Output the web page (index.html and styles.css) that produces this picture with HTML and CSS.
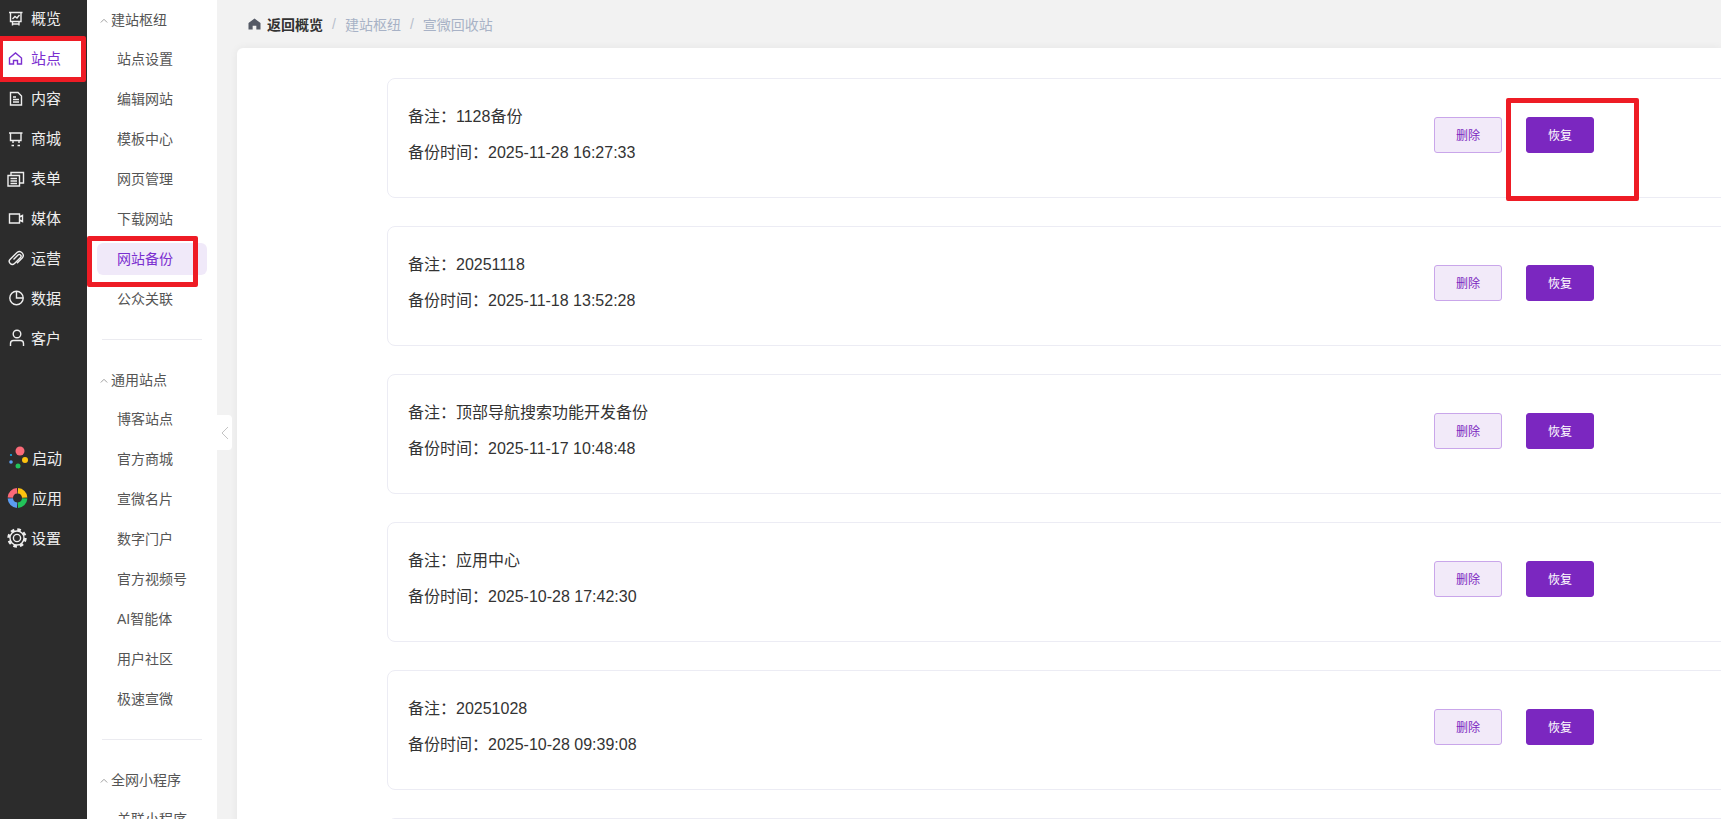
FILE: index.html
```html
<!DOCTYPE html>
<html lang="zh-CN">
<head>
    <meta charset="UTF-8">
    <title>网站备份</title>
    <link rel="stylesheet" href="styles.css">
</head>
<body>

    <!-- Icon rail -->
    <div class="rail">
        <ul class="rail-list">
            <li class="rail-item">
                <svg class="rail-icon" viewBox="0 0 20 20"><path d="M2 4.5H15.5M3.5 4.5V13.5H14V4.5M5.5 13.5V17.5M12 13.5V17.5M5.5 16H12M5.5 11L8 8.5L10 10L12.5 7"/></svg>
                <span>概览</span>
            </li>
            <li class="rail-item active">
                <svg class="rail-icon" viewBox="0 0 20 20"><path d="M2.5 10L8.5 5L14.5 10V16H10.5V12.5H6.5V16H2.5Z"/></svg>
                <span>站点</span>
            </li>
            <li class="rail-item">
                <svg class="rail-icon" viewBox="0 0 20 20"><path d="M3.5 4.5H11L14.5 8V17H3.5ZM6 9H9M6 11.5H12M6 14H12"/></svg>
                <span>内容</span>
            </li>
            <li class="rail-item">
                <svg class="rail-icon" viewBox="0 0 20 20"><path d="M2 5H15.5M3.5 5V12.5H14V5M6 12.5V15M12 12.5V15M4.5 17.5H7M10.5 17.5H13"/></svg>
                <span>商城</span>
            </li>
            <li class="rail-item">
                <svg class="rail-icon" viewBox="0 0 20 20"><path d="M1 7.5H12.5V18H1ZM3.5 10.5H10M3.5 13H10M3.5 15.5H10M4 7V4.5H16.5V15H13"/></svg>
                <span>表单</span>
            </li>
            <li class="rail-item">
                <svg class="rail-icon" viewBox="0 0 20 20"><path d="M2.5 6H12.5V15H2.5ZM12.5 9L15.5 7.5V13.5L12.5 12"/></svg>
                <span>媒体</span>
            </li>
            <li class="rail-item">
                <svg class="rail-icon" viewBox="0 0 20 20"><path d="M6.5 11.5L11 7A1.7 1.7 0 0 1 13.5 9.5L7.5 15.5A3 3 0 0 1 3.2 11.2L10 4.5A3.8 3.8 0 0 1 15.2 10L10 15.2"/></svg>
                <span>运营</span>
            </li>
            <li class="rail-item">
                <svg class="rail-icon" viewBox="0 0 20 20"><circle cx="9.5" cy="10" r="6.7"/><path d="M9.5 3.3V10H16.2"/></svg>
                <span>数据</span>
            </li>
            <li class="rail-item">
                <svg class="rail-icon" viewBox="0 0 20 20"><circle cx="10" cy="6" r="3.8"/><path d="M3.5 18V15.5A3 3 0 0 1 6.5 12.5H13.5A3 3 0 0 1 16.5 15.5V18"/></svg>
                <span>客户</span>
            </li>
        </ul>
        <ul class="rail-list rail-bottom">
            <li class="rail-item">
                <svg class="rail-icon color" viewBox="0 0 20 20">
                    <circle cx="13" cy="3" r="4.5" fill="#fb6a78"/>
                    <circle cx="18" cy="12" r="3" fill="#fdc30f"/>
                    <circle cx="11" cy="18" r="2.5" fill="#22c35a"/>
                    <circle cx="4" cy="14" r="1.8" fill="#5b9cf0"/>
                    <circle cx="4" cy="7" r="1.1" fill="#18a8e8"/>
                </svg>
                <span class="rail-label-wide">启动</span>
            </li>
            <li class="rail-item">
                <svg class="rail-icon color" viewBox="0 0 20 20">
                    <circle class="ring" cx="10.5" cy="10" r="7.2" pathLength="100" stroke="#22c35a" stroke-dashoffset="99"/>
                    <circle class="ring" cx="10.5" cy="10" r="7.2" pathLength="100" stroke="#5b9cf0" stroke-dashoffset="74"/>
                    <circle class="ring" cx="10.5" cy="10" r="7.2" pathLength="100" stroke="#fb6a78" stroke-dashoffset="49"/>
                    <circle class="ring" cx="10.5" cy="10" r="7.2" pathLength="100" stroke="#fdc30f" stroke-dashoffset="24"/>
                </svg>
                <span class="rail-label-wide">应用</span>
            </li>
            <li class="rail-item">
                <svg class="rail-icon" viewBox="0 0 20 20">
                    <circle cx="10" cy="10" r="3.6"/>
                    <circle cx="10" cy="10" r="7"/>
                    <circle class="teeth" cx="10" cy="10" r="8.4"/>
                </svg>
                <span>设置</span>
            </li>
        </ul>
    </div>

    <!-- Sub navigation -->
    <div class="subnav">
        <div class="subnav-title">
            <svg class="chevron" viewBox="0 0 10 6"><path d="M1 5.5L5 1.5L9 5.5"/></svg>
            <span>建站枢纽</span>
        </div>
        <ul>
            <li><a href="#">站点设置</a></li>
            <li><a href="#">编辑网站</a></li>
            <li><a href="#">模板中心</a></li>
            <li><a href="#">网页管理</a></li>
            <li><a href="#">下载网站</a></li>
            <li><a href="#" class="current">网站备份</a></li>
            <li><a href="#">公众关联</a></li>
        </ul>
        <div class="subnav-line"></div>

        <div class="subnav-title">
            <svg class="chevron" viewBox="0 0 10 6"><path d="M1 5.5L5 1.5L9 5.5"/></svg>
            <span>通用站点</span>
        </div>
        <ul>
            <li><a href="#">博客站点</a></li>
            <li><a href="#">官方商城</a></li>
            <li><a href="#">宣微名片</a></li>
            <li><a href="#">数字门户</a></li>
            <li><a href="#">官方视频号</a></li>
            <li><a href="#">AI智能体</a></li>
            <li><a href="#">用户社区</a></li>
            <li><a href="#">极速宣微</a></li>
        </ul>
        <div class="subnav-line"></div>

        <div class="subnav-title">
            <svg class="chevron" viewBox="0 0 10 6"><path d="M1 5.5L5 1.5L9 5.5"/></svg>
            <span>全网小程序</span>
        </div>
        <ul>
            <li><a href="#">关联小程序</a></li>
        </ul>
    </div>

    <!-- Main Content -->
    <div class="main">
        <div class="crumbs">
            <svg class="home-icon" viewBox="0 0 14 13"><path d="M7 0.5L13.5 5.5V12.5H9V8.5H5V12.5H0.5V5.5Z"/></svg>
            <span class="crumb-home">返回概览</span>
            <span class="crumb-sep">/</span>
            <span>建站枢纽</span>
            <span class="crumb-sep">/</span>
            <span>宣微回收站</span>
        </div>

        <div class="panel">
            <div class="card">
                <div class="card-info">
                    <p>备注：1128备份</p>
                    <p>备份时间：2025-11-28 16:27:33</p>
                </div>
                <div class="card-btns">
                    <button class="btn-light">删除</button>
                    <button class="btn-main">恢复</button>
                </div>
            </div>
            <div class="card">
                <div class="card-info">
                    <p>备注：20251118</p>
                    <p>备份时间：2025-11-18 13:52:28</p>
                </div>
                <div class="card-btns">
                    <button class="btn-light">删除</button>
                    <button class="btn-main">恢复</button>
                </div>
            </div>
            <div class="card">
                <div class="card-info">
                    <p>备注：顶部导航搜索功能开发备份</p>
                    <p>备份时间：2025-11-17 10:48:48</p>
                </div>
                <div class="card-btns">
                    <button class="btn-light">删除</button>
                    <button class="btn-main">恢复</button>
                </div>
            </div>
            <div class="card">
                <div class="card-info">
                    <p>备注：应用中心</p>
                    <p>备份时间：2025-10-28 17:42:30</p>
                </div>
                <div class="card-btns">
                    <button class="btn-light">删除</button>
                    <button class="btn-main">恢复</button>
                </div>
            </div>
            <div class="card">
                <div class="card-info">
                    <p>备注：20251028</p>
                    <p>备份时间：2025-10-28 09:39:08</p>
                </div>
                <div class="card-btns">
                    <button class="btn-light">删除</button>
                    <button class="btn-main">恢复</button>
                </div>
            </div>
            <div class="card"></div>
        </div>
    </div>

    <!-- Collapse handle -->
    <div class="collapse-handle">
        <svg viewBox="0 0 8 14"><path d="M7 1L1 7L7 13"/></svg>
    </div>

    <!-- Red annotation boxes drawn over the screenshot -->
    <div class="mark mark-site"></div>
    <div class="mark mark-backup"></div>
    <div class="mark mark-restore"></div>

</body>
</html>
```

FILE: styles.css
```css
* {
    margin: 0;
    padding: 0;
    box-sizing: border-box;
    font-family: "Liberation Sans", "Noto Sans CJK SC", sans-serif;
}

html, body {
    height: 100%;
    overflow: hidden;
}

body {
    display: flex;
    position: relative;
    background-color: #f2f2f2;
}

ul {
    list-style: none;
}

/* Icon rail */
.rail {
    width: 87px;
    flex-shrink: 0;
    height: 100%;
    background-color: #2c2c2c;
    color: #eeeeee;
}

.rail-list {
    margin-top: -2px;
}

.rail-bottom {
    margin-top: 80px;
}

.rail-item {
    height: 40px;
    padding-left: 7px;
    margin-right: 3px;
    display: flex;
    align-items: center;
    gap: 4px;
    font-size: 15px;
}

.rail-item span {
    padding-bottom: 2px;
}

.rail-item.active {
    background-color: white;
    color: #7b2fd0;
}

.rail-icon {
    width: 20px;
    height: 20px;
    flex-shrink: 0;
    overflow: visible;
    fill: none;
    stroke: currentColor;
    stroke-width: 1.4;
}

.rail-icon.color {
    stroke: none;
}

.ring {
    fill: none;
    stroke-width: 5.4;
    stroke-dasharray: 23 77;
}

.teeth {
    stroke-width: 2.6;
    stroke-dasharray: 3.6 3;
}

.rail-label-wide {
    margin-left: 1px;
}

/* Sub navigation */
.subnav {
    width: 130px;
    flex-shrink: 0;
    height: 100%;
    background-color: white;
    overflow: hidden;
    color: #555555;
    font-size: 14px;
}

.subnav-title {
    height: 39px;
    padding: 0 0 2px 13px;
    display: flex;
    align-items: center;
    gap: 3px;
}

.chevron {
    width: 8px;
    height: 5px;
    margin-top: 3px;
    fill: none;
    stroke: #888888;
    stroke-width: 1;
}

.subnav li {
    padding: 4px 10px;
}

.subnav li a {
    display: block;
    height: 32px;
    line-height: 32px;
    padding-left: 20px;
    border-radius: 6px;
    color: #555555;
    text-decoration: none;
}

.subnav li a.current {
    background-color: #f0e9f9;
    color: #7b2fd0;
}

.subnav-line {
    height: 1px;
    margin: 20px 15px;
    background-color: #ebebf0;
}

/* Main */
.main {
    flex: 1;
    min-width: 0;
    height: 100%;
    overflow: hidden;
}

.crumbs {
    height: 48px;
    padding-left: 31px;
    display: flex;
    align-items: center;
    gap: 6px;
    font-size: 14px;
    color: #a8b2c6;
}

.home-icon {
    width: 13px;
    height: 12px;
    fill: #555a66;
}

.crumb-home {
    font-weight: bold;
    color: #333333;
}

.crumb-sep {
    margin: 0 3px;
    color: #b8bfcc;
}

.panel {
    margin-left: 20px;
    height: 100%;
    padding: 30px 0 0 150px;
    background-color: white;
    border-radius: 6px 0 0 0;
    box-shadow: 0px 0px 8px rgba(0,0,0,0.06);
    overflow: hidden;
}

.card {
    width: 1500px;
    height: 120px;
    margin-bottom: 28px;
    padding: 20px 292px 0 20px;
    display: flex;
    justify-content: space-between;
    border: 1px solid #ececf4;
    border-radius: 8px;
}

.card-info p {
    line-height: 36px;
    font-size: 16px;
    color: #333333;
}

.card-btns {
    margin-top: 18px;
    display: flex;
    gap: 24px;
}

.card-btns button {
    width: 68px;
    height: 36px;
    padding-bottom: 2px;
    border-radius: 3px;
    font-size: 12px;
    cursor: pointer;
}

.btn-light {
    background-color: #f2eaf9;
    border: 1px solid #c9a6ea;
    color: #7b27c0;
}

.btn-main {
    background-color: #7b27c0;
    border: 1px solid #7b27c0;
    color: white;
}

/* Overlays */
.collapse-handle {
    position: absolute;
    left: 217px;
    top: 415px;
    width: 15px;
    height: 35px;
    display: flex;
    align-items: center;
    justify-content: center;
    background-color: white;
    border-radius: 0 4px 4px 0;
}

.collapse-handle svg {
    width: 8px;
    height: 14px;
    fill: none;
    stroke: #c4c4c4;
    stroke-width: 1;
}

.mark {
    position: absolute;
    border: 5px solid #ee1c25;
    border-radius: 2px;
}

.mark-site {
    left: -2px;
    top: 36px;
    width: 88px;
    height: 46px;
}

.mark-backup {
    left: 87px;
    top: 236px;
    width: 111px;
    height: 51px;
}

.mark-restore {
    left: 1506px;
    top: 98px;
    width: 133px;
    height: 103px;
}
```
